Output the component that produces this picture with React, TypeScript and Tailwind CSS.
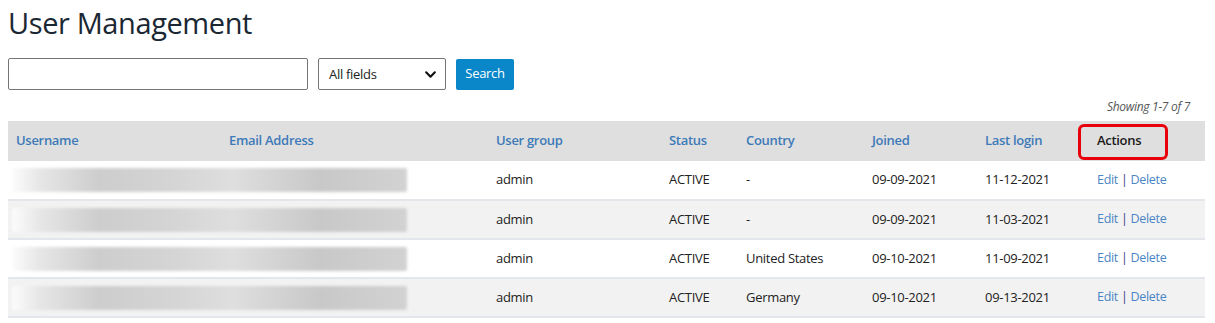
import React from "react";

type Row = {
  group: string;
  status: string;
  country: string;
  joined: string;
  last: string;
  shade: boolean;
};

const rows: Row[] = [
  { group: "admin", status: "ACTIVE", country: "-", joined: "09-09-2021", last: "11-12-2021", shade: false },
  { group: "admin", status: "ACTIVE", country: "-", joined: "09-09-2021", last: "11-03-2021", shade: true },
  { group: "admin", status: "ACTIVE", country: "United States", joined: "09-10-2021", last: "11-09-2021", shade: false },
  { group: "admin", status: "ACTIVE", country: "Germany", joined: "09-10-2021", last: "09-13-2021", shade: true },
];

const headers = ["Username", "Email Address", "User group", "Status", "Country", "Joined", "Last login"];
const widths = ["w-[213px]", "w-[267px]", "w-[173px]", "w-[77px]", "w-[126px]", "w-[113px]", "w-[112px]", ""];

const Redacted = () => (
  <div className="h-[24px] w-[395px] rounded-[2px] bg-[linear-gradient(90deg,#fcfcfc_0%,#e6e6e6_7%,#cdcdcd_22%,#d4d4d4_40%,#dedede_56%,#c8c8c8_78%,#d2d2d2_100%)] blur-[1.5px]" />
);

const App = () => {
  return (
    <div className="w-[1215px] h-[323px] bg-white px-2 pt-[3px] font-['Open_Sans','Noto_Sans',sans-serif] text-[#222]">
      <h1 className="text-[29px] leading-[40px] font-medium text-[#1b2733] tracking-[-0.4px]">User Management</h1>

      <div className="mt-[15px] flex items-center gap-[10px]">
        <input className="h-[32px] w-[300px] rounded-[2px] border border-[#767676] bg-white" />
        <div className="relative h-[32px] w-[128px] rounded-[2px] border border-[#767676] bg-white">
          <span className="absolute left-[10px] top-[6px] text-[13px] tracking-[-0.3px]">All fields</span>
          <svg className="absolute right-[8px] top-[9px]" width="13" height="13" viewBox="0 0 24 24" fill="none" stroke="#111" strokeWidth="4" strokeLinecap="round" strokeLinejoin="round">
            <path d="M4 8l8 8 8-8" />
          </svg>
        </div>
        <button className="h-[31px] w-[58px] rounded-[2px] bg-[#0a87c8] text-[13px] text-white tracking-[-0.3px]">Search</button>
      </div>

      <div className="mt-[8px] pr-[17px] text-right text-[12px] italic text-[#555] tracking-[-0.3px]">Showing 1-7 of 7</div>

      <table className="mt-[5px] w-[1197px] table-fixed border-collapse text-[13px] tracking-[-0.3px]">
        <thead>
          <tr className="h-[40px] bg-[#dfdfdf]">
            {headers.map((h, i) => (
              <th key={h} className={`${widths[i]} pl-2 text-left font-semibold text-[#3d7ab8]`}>
                {h}
              </th>
            ))}
            <th className="relative pl-2 text-left font-semibold text-[#1a1a1a]">
              Actions
              <span className="absolute left-[-11px] top-[3px] h-[36px] w-[90px] rounded-[6px] border-[3px] border-[#e8000b]" />
            </th>
          </tr>
        </thead>
        <tbody>
          {rows.map((r, i) => (
            <tr key={i} className={`h-[39px] border-b-2 border-[#e3e6eb] ${r.shade ? "bg-[#f2f2f2]" : "bg-white"}`}>
              <td colSpan={2} className="pl-1">
                <Redacted />
              </td>
              <td className="pl-2">{r.group}</td>
              <td className="pl-2">{r.status}</td>
              <td className="pl-2">{r.country}</td>
              <td className="pl-2">{r.joined}</td>
              <td className="pl-2">{r.last}</td>
              <td className="pl-2 text-[12.5px]">
                <span className="text-[#4a86c5]">Edit</span>
                <span className="text-[#3b3f8c]"> | </span>
                <span className="text-[#4a86c5]">Delete</span>
              </td>
            </tr>
          ))}
        </tbody>
      </table>
    </div>
  );
};

export default App;
